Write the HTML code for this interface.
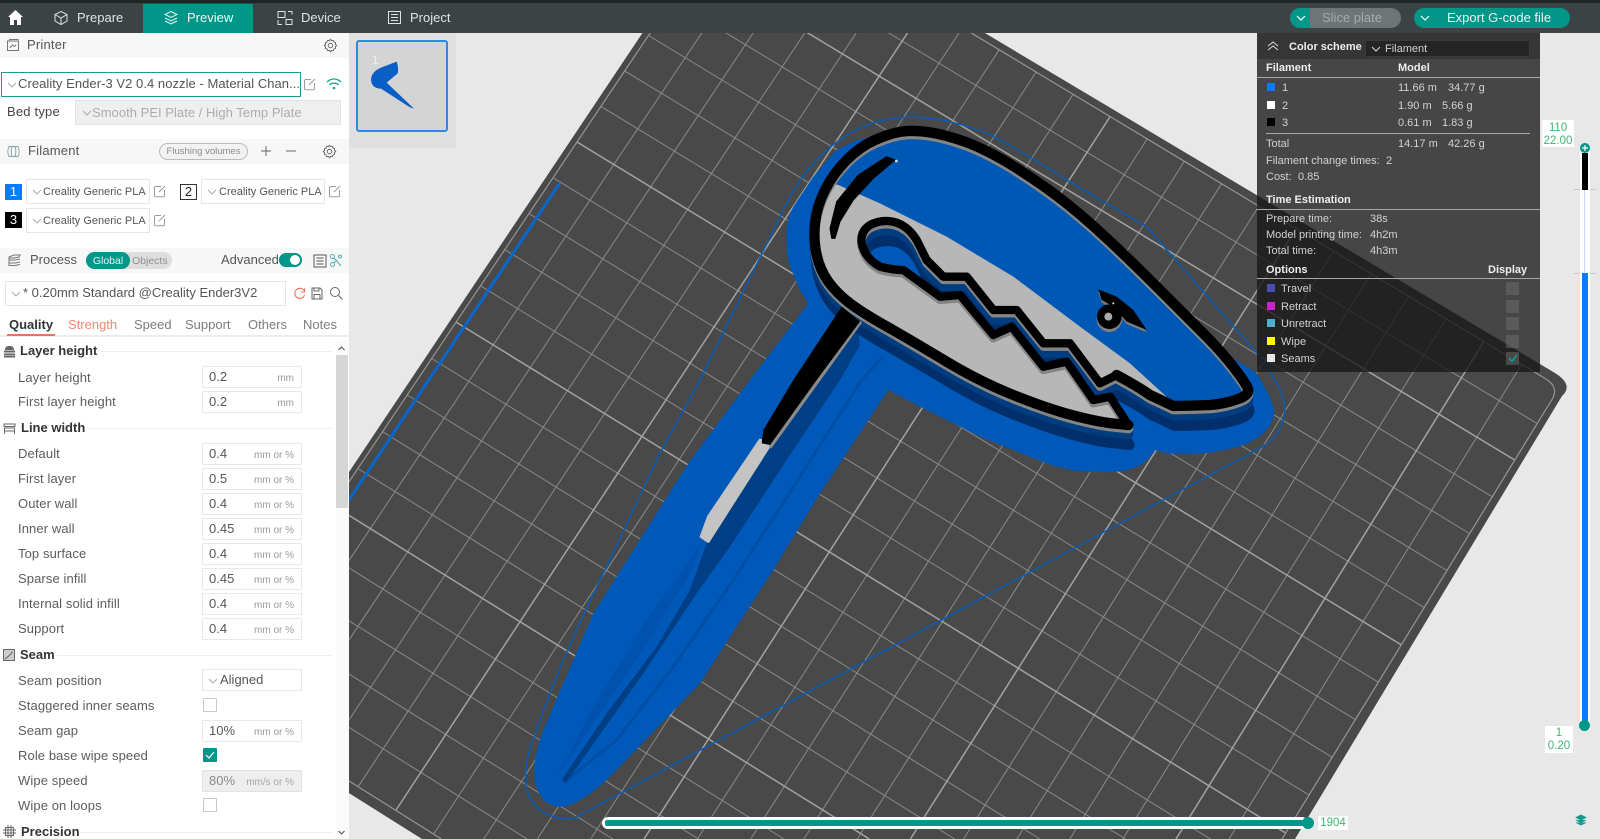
<!DOCTYPE html>
<html><head><meta charset="utf-8"><title>Preview</title>
<style>
*{box-sizing:border-box}
html,body{margin:0;padding:0;width:1600px;height:839px;overflow:hidden;background:#e8e8e8;font-family:"Liberation Sans",sans-serif;font-size:13px;color:#444}
.a{position:absolute}
.t{position:absolute;white-space:nowrap;line-height:16px;height:16px}
#top{left:0;top:0;width:1600px;height:33px;background:#3b4345;border-top:3px solid #1f2525;z-index:9}
#top .t{color:#e2e4e4;font-size:13px;letter-spacing:0;top:7px}
.hd{position:absolute;left:0;width:349px;height:25px;background:#f7f7f7}
.box{position:absolute;background:#fff;border:1px solid #e6e6e6}
.sel{font-size:11px;color:#555}
.lb{position:absolute;left:18px;white-space:nowrap;line-height:16px;color:#5c5c5c;font-size:13px;letter-spacing:.1px;margin-top:.5px}
.sec{position:absolute;left:20px;white-space:nowrap;line-height:15px;color:#333;font-size:13px;font-weight:bold}
.sl{position:absolute;height:1px;background:#efefef;right:17px}
.in{position:absolute;left:202px;width:100px;height:22px;background:#fff;border:1px solid #e8e8e8;font-size:13px;color:#555;line-height:20px;padding-left:6px}
.in i{position:absolute;right:7px;top:2px;font-style:normal;font-size:10px;color:#999}
.cb{position:absolute;left:203px;width:14px;height:14px;border:1px solid #c8c8c8;background:#fff;border-radius:1px}
.tab{position:absolute;top:317px;line-height:16px;font-size:13px;color:#7d7d7d;white-space:nowrap}
#fp{left:1257px;top:33px;width:283px;height:339px;background:rgba(23,23,23,.775);z-index:5;color:#d4d4d4;font-size:11px}
#fp .t{color:#d2d2d2;font-size:11px;line-height:14px;height:14px;margin-top:1px}
#fp .b{font-weight:bold;color:#eee}
#fp .s{position:absolute;left:10px;width:8px;height:8px}
#fp .c{position:absolute;left:249px;width:13px;height:13px;background:rgba(110,110,110,.5)}
.ln{position:absolute;background:#a8a8a8;height:1px}
.g{color:#3fb56f;font-size:11.5px;text-align:center;line-height:13px;background:#fff;position:absolute;z-index:4}
svg{display:block}
.ic{position:absolute;overflow:visible}
</style></head><body>
<svg width="0" height="0" style="position:absolute">
<symbol id="edit" viewBox="0 0 14 14"><path d="M11.5 6v5.5a1.2 1.2 0 0 1-1.2 1.2H2.7a1.2 1.2 0 0 1-1.2-1.2V3.7a1.2 1.2 0 0 1 1.2-1.2H8" fill="none" stroke="#9a9a9a" stroke-width="1"/><path d="M6 8l6-6" stroke="#9a9a9a" stroke-width="1"/></symbol>
<symbol id="gear" viewBox="0 0 16 16"><path d="M8 1.2l1.1 1.6 1.9-.3.7 1.8 1.8.7-.3 1.9L14.8 8l-1.6 1.1.3 1.9-1.8.7-.7 1.8-1.9-.3L8 14.8l-1.1-1.6-1.9.3-.7-1.8-1.8-.7.3-1.9L1.2 8l1.6-1.1-.3-1.9 1.8-.7.7-1.8 1.9.3z" fill="none" stroke="#666" stroke-width="1" stroke-linejoin="round"/><circle cx="8" cy="8" r="2.4" fill="none" stroke="#666" stroke-width="1"/></symbol>
<symbol id="chev" viewBox="0 0 10 6"><path d="M1 1l4 4 4-4" fill="none" stroke="#aaa" stroke-width="1"/></symbol>
</svg>

<!-- plate + model -->
<svg class="a" style="left:0;top:0;z-index:2" width="1600" height="839" viewBox="0 0 1600 839">
 <defs>
  <path id="H" d="M1045 975L997 970Q950 965 875 945 800 925 700 885 600 845 500 785 400 725 325 682 250 640 210 610 170 580 145 545 120 510 110 465 100 420 105 370 110 320 135 270 160 220 200 180 240 140 285 120 330 100 365 95 400 90 450 97 500 105 560 127 620 150 690 192 760 235 830 287 900 340 975 410 1050 480 1125 555 1200 630 1265 695 1330 760 1367 810 1405 860 1405 870 1405 885 1380 895 1335 912 1290 915 1235 917 1180 918 1145 901 1110 885 1075 860 1010 825L960 850 870 730 790 730 710 630 640 630 560 530 490 530 440 480 410 420Q385 380 350 368 310 355 270 375 240 395 245 430 255 475 300 500 340 510 370 510L480 590 540 585 640 705 695 680 790 800 860 785 940 900 990 890Z"/>
  <path id="O" d="M1045 975L997 970Q950 965 875 945 800 925 700 885 600 845 500 785 400 725 325 682 250 640 210 610 170 580 145 545 120 510 110 465 100 420 105 370 110 320 135 270 160 220 200 180 240 140 285 120 330 100 365 95 400 90 450 97 500 105 560 127 620 150 690 192 760 235 830 287 900 340 975 410 1050 480 1125 555 1200 630 1265 695 1330 760 1367 810 1405 860 1405 870 1405 885 1380 895 1335 912 1290 915 1235 917 1180 918 1145 901 1110 885 1075 860 1010 825"/>
  <clipPath id="hc"><use href="#H"/></clipPath>
 </defs>
 <path d="M740-113L1555 373Q1574 385 1562 396L1295 839H422L198 698Z" fill="#484948"/>
 <path fill="none" stroke="#898a89" stroke-width="1" d="M779.100-82.700L245.200 715.800M815.600-60.700L282.700 739.400M852.200-38.700L320.400 763M888.900-16.600L358.100 786.700M962.400 27.600L433.600 834.100M999.200 49.800L483.800 839M1036.100 72L537.300 839M1073.100 94.300L590.700 839M1147.200 138.900L697.400 839M1184.400 161.300L750.700 839M1221.600 183.700L803.900 839M1258.900 206.100L857.200 839M1333.700 251.100L963.600 839M1371.100 273.700L1016.800 839M1408.700 296.300L1069.800 839M1446.300 318.900L1122.900 839M1521.700 364.300L1229 839M718.200-69.800L1537.100 423.500M672.100.3L1492.100 496.700M648.500 35.500L1469.500 533.500M624.700 70.900L1446.800 570.500M600.900 106.400L1424.100 607.600M553 177.700L1378.300 682.200M528.900 213.600L1355.300 719.600M504.700 249.600L1332.200 757.300M480.500 285.800L1309 795.100M431.700 358.500L1210.500 839M407.200 395L1125.400 839M382.600 431.700L1040 839M357.800 468.500L954.700 839M308.200 542.500L784 839M283.200 579.700L698.500 839M258.100 617.100L612.800 839M232.900 654.600L527.100 839"/>
 <path fill="none" stroke="#a2a3a2" stroke-width="1.500" d="M925.600 5.500L395.800 810.400M1110.100 116.600L644 839M1296.200 228.600L910.400 839M1483.900 341.600L1176 839M695.700-34.800L1514.700 460M577 142L1401.200 644.800M456.100 322.100L1285.700 833M333 505.400L869.400 839"/>
 <path fill="none" stroke="#949594" stroke-width="1.200" d="M441.400 839L207.700 692.200 742.600-104.700 1545 378.400Q1559.500 387.100 1552 399.500L1282 839"/>

 <path d="M560 182.700L349 500" stroke="#0a66cc" stroke-width="3" fill="none"/>
 <path d="M580 815L920 631.700 1163 500 1256.700 450Q1285 435 1285 406.700 1282 385 1256.700 353L1146.700 226.700 1066.700 180Q1020 150 986.700 133 913 105 863 126.700 810 150 780 216.700L700 380 660 453 606.700 566.700Q560 660 533 740 515 790 540 810 565 825 580 815Z" fill="none" stroke="#0a5cb5" stroke-width="1.500"/>
 <g transform="translate(780 100) scale(.33333)" stroke-linejoin="round" stroke-linecap="round">
  <path fill="#0059b8" d="M85 610L-90 840-275 1090-560 1540-710 1890Q-745 1985-735 2040-720 2125-650 2120-590 2110-500 2020L-240 1750-20 1410 120 1180 325 870 420 920 600 1010 800 1090Q870 1115 930 1115 1020 1120 1060 1105 1100 1090 1125 1050 1165 1065 1200 1060 1270 1065 1330 1050 1400 1040 1450 1000 1490 960 1480 920 1470 880 1425 815L1340 765 1210 635 1060 485 910 345 770 235 640 150 500 100Q450 90 400 90 350 90 320 100L230 120 170 150 100 230 40 320Q15 370 20 420 20 470 30 500L60 570Z"/>
  <path d="M305 775L245 840 60 1130-140 1440-320 1700-490 1920-645 2045" fill="none" stroke="#004fa6" stroke-width="9"/>
  <polygon fill="#0052ae" points="-230,1320 -400,1560 -560,1820 -670,2030 -540,1840 -400,1630 -280,1440"/>
  <polygon fill="#003f86" points="230,660 240,735 180,840 20,1080 -150,1340 -250,1480 -410,1720 -640,2045 -655,2040 -520,1840 -370,1640 -270,1470 -220,1330 -30,1030"/>
  <use href="#H" transform="translate(4 60)" fill="#002f6c" stroke="#002f6c" stroke-width="30"/>
  <use href="#H" transform="translate(0 28)" fill="#003c80" stroke="#003c80" stroke-width="30"/>
  <polygon fill="#c4c4c4" stroke="#c4c4c4" stroke-width="8" points="-60,1020 -30,1035 -215,1325 -237,1310 -215,1250"/>
  <path d="M240 668L-28 1040" stroke="#8a8a8a" stroke-width="10" fill="none"/>
  <polygon fill="#000" points="185,620 240,665 110,840 -30,1035 -55,1030 -50,990 40,840"/>
  <use href="#H" fill="#b7b7b7"/>
  <g clip-path="url(#hc)"><polygon fill="#0058b5" points="100,240 175,255 300,310 500,410 700,530 900,680 1050,790 1170,900 1500,1000 1500,0 100,0"/></g>
  <use href="#H" transform="translate(0 10)" fill="none" stroke="#848484" stroke-width="25"/>
  <use href="#O" transform="translate(0 10)" fill="none" stroke="#848484" stroke-width="30"/>
  <use href="#H" fill="none" stroke="#000" stroke-width="25"/>
  <use href="#O" fill="none" stroke="#000" stroke-width="31"/>
  <polygon fill="#000" stroke="#000" stroke-width="3" points="155,415 150,385 170,305 235,225 320,170 345,180 280,235 220,300 180,365 165,415"/>
  <circle cx="349" cy="183" r="4" fill="#ddd"/>
  <circle cx="988" cy="658" r="38" fill="#808080"/>
  <polygon fill="#808080" points="955,575 1010,597 1060,637 1100,697 1040,672 1000,627 965,607"/>
  <circle cx="988" cy="650" r="37" fill="#000"/>
  <polygon fill="#000" points="955,568 1010,590 1060,630 1100,690 1040,665 1000,620 965,600"/>
  <circle cx="985" cy="650" r="12" fill="#aaa"/>
  <circle cx="1000" cy="610" r="3" fill="#eee"/>
 </g>
</svg>

<!-- thumb -->
<div class="a" style="left:349px;top:33px;width:107px;height:115px;background:#e0e0e0;z-index:3;border-radius:0 0 3px 0"></div>
<div class="a" style="left:356px;top:40px;width:92px;height:92px;background:#d4d4d4;border:2px solid #2d8ae0;border-radius:3px;z-index:3"><span class="t" style="left:14px;top:10px;color:#eee;font-size:12px">1</span></div>
<svg class="a" style="left:345px;top:30px;z-index:3" width="120" height="110" viewBox="0 0 360 330"><path d="M78 150Q78 125 110 112L155 95Q162 115 158 130 140 145 125 158L207 236 195 232 108 176Q80 175 78 150Z" fill="#0a5fc4"/></svg>

<!-- top bar -->
<div class="a" id="top">
 <svg class="ic" style="left:7px;top:6px" width="17" height="17" viewBox="0 0 17 17"><path d="M8.500 1L1 8h2v8h4v-5h3v5h4V8h2z" fill="#fff"/></svg>
 <svg class="ic" style="left:53px;top:7px" width="16" height="16" viewBox="0 0 16 16"><path d="M8 1.500l6 3v6.500l-6 3.500-6-3.500V4.500zM2 4.500l6 3.500 6-3.500M8 8v6" fill="none" stroke="#dfe2e2" stroke-width="1"/></svg>
 <span class="t" style="left:77px">Prepare</span>
 <div class="a" style="left:143px;top:1px;width:110px;height:29px;background:#009688"></div>
 <svg class="ic" style="left:163px;top:7px" width="16" height="16" viewBox="0 0 16 16"><path d="M8 1.500l6 3-6 3-6-3zM2 8l6 3 6-3M2 11l6 3 6-3" fill="none" stroke="#e8f5f3" stroke-width="1"/></svg>
 <span class="t" style="left:187px;color:#f0faf8">Preview</span>
 <svg class="ic" style="left:277px;top:7px" width="16" height="16" viewBox="0 0 16 16"><path d="M1 1.500h7v6H1zM11 1.500h4v3M1 10v4.500h4M9 9.500h6v5H9z" fill="none" stroke="#dfe2e2" stroke-width="1"/></svg>
 <span class="t" style="left:301px">Device</span>
 <svg class="ic" style="left:387px;top:7px" width="15" height="15" viewBox="0 0 15 15"><path d="M1.500 1.500h12v12h-12zM4 4.500h7M4 7.500h7M4 10.500h7" fill="none" stroke="#dfe2e2" stroke-width="1"/></svg>
 <span class="t" style="left:410px">Project</span>
 <div class="a" style="left:1290px;top:5px;width:111px;height:20px;border-radius:10px;background:#6f7474;overflow:hidden"><div class="a" style="left:0;top:0;width:20px;height:20px;background:#009688"></div></div>
 <svg class="ic" style="left:1296px;top:12px" width="10" height="6" viewBox="0 0 10 6"><path d="M1 1l4 4 4-4" fill="none" stroke="#fff" stroke-width="1.200"/></svg>
 <span class="t" style="left:1322px;color:#a6abab">Slice plate</span>
 <div class="a" style="left:1414px;top:5px;width:156px;height:20px;border-radius:10px;background:#009688"></div>
 <svg class="ic" style="left:1420px;top:12px" width="10" height="6" viewBox="0 0 10 6"><path d="M1 1l4 4 4-4" fill="none" stroke="#fff" stroke-width="1.200"/></svg>
 <span class="t" style="left:1447px;color:#e9f6f4">Export G-code file</span>
</div>

<!-- left panel -->
<div class="a" style="left:0;top:0;width:349px;height:839px;background:#fff;z-index:8;overflow:hidden">
 <div class="hd" style="top:33px"></div>
 <svg class="ic" style="left:6px;top:38px" width="14" height="14" viewBox="0 0 14 14"><path d="M1.500 3h11v9.500h-11zM3.500 3V1.500h9M4 10l2.500-3 2 1.500L10 7" fill="none" stroke="#777" stroke-width="1"/></svg>
 <span class="t" style="left:27px;top:37px;color:#555;letter-spacing:.2px">Printer</span>
 <svg class="ic" style="left:323px;top:38px" width="15" height="15"><use href="#gear"/></svg>

 <div class="a" style="left:1px;top:72px;width:300px;height:25px;border:1px solid #1b9c8e;background:#fff"></div>
 <svg class="ic" style="left:7px;top:82px" width="10" height="6"><use href="#chev"/></svg>
 <span class="t" style="left:18px;top:76px;color:#555;letter-spacing:.05px">Creality Ender-3 V2 0.4 nozzle - Material Chan...</span>
 <svg class="ic" style="left:303px;top:77px" width="14" height="14"><use href="#edit"/></svg>
 <svg class="ic" style="left:326px;top:78px" width="16" height="12" viewBox="0 0 16 12"><path d="M1 4c4-4 10-4 14 0M3.500 7c2.500-2.500 6.500-2.500 9 0" fill="none" stroke="#14a08f" stroke-width="1.300"/><circle cx="8" cy="10" r="1.300" fill="#14a08f"/></svg>
 <span class="t" style="left:7px;top:104px;color:#444;letter-spacing:.2px">Bed type</span>
 <div class="a" style="left:75px;top:100px;width:266px;height:25px;background:#efefef;border:1px solid #e2e2e2"></div>
 <svg class="ic" style="left:82px;top:110px" width="10" height="6"><use href="#chev"/></svg>
 <span class="t" style="left:92px;top:105px;color:#acacac;letter-spacing:.03px">Smooth PEI Plate / High Temp Plate</span>

 <div class="hd" style="top:139px"></div>
 <svg class="ic" style="left:7px;top:145px" width="13" height="13" viewBox="0 0 13 13"><path d="M2 1.500c-1.500 3-1.500 7 0 10M5 1.500c-1 3-1 7 0 10M8 1.500c1 3 1 7 0 10M11 1.500c1.500 3 1.500 7 0 10M2 1.500h9M2 11.500h9" fill="none" stroke="#7fa8a3" stroke-width="1"/></svg>
 <span class="t" style="left:28px;top:143px;color:#555;letter-spacing:.2px">Filament</span>
 <div class="a" style="left:159px;top:143px;width:89px;height:17px;border:1px solid #bbb;border-radius:9px;background:#f2f2f2;color:#8a8a8a;font-size:9.5px;line-height:15px;text-align:center">Flushing volumes</div>
 <svg class="ic" style="left:260px;top:145px" width="12" height="12" viewBox="0 0 12 12"><path d="M1 6h10M6 1v10" stroke="#666" stroke-width="1"/></svg>
 <svg class="ic" style="left:286px;top:145px" width="11" height="12" viewBox="0 0 11 12"><path d="M0 6h10" stroke="#666" stroke-width="1"/></svg>
 <svg class="ic" style="left:322px;top:144px" width="15" height="15"><use href="#gear"/></svg>

 <div class="a" style="left:5px;top:184px;width:17px;height:16px;background:#0a7bff;color:#fff;text-align:center;line-height:16px;font-size:13px">1</div>
 <div class="box" style="left:26px;top:179px;width:124px;height:25px"></div>
 <svg class="ic" style="left:32px;top:189px" width="10" height="6"><use href="#chev"/></svg>
 <span class="t sel" style="left:43px;top:184px">Creality Generic PLA</span>
 <svg class="ic" style="left:153px;top:184px" width="14" height="14"><use href="#edit"/></svg>
 <div class="a" style="left:180px;top:184px;width:17px;height:16px;background:#fff;border:1px solid #333;color:#222;text-align:center;line-height:14px;font-size:13px">2</div>
 <div class="box" style="left:201px;top:179px;width:124px;height:25px"></div>
 <svg class="ic" style="left:207px;top:189px" width="10" height="6"><use href="#chev"/></svg>
 <span class="t sel" style="left:219px;top:184px">Creality Generic PLA</span>
 <svg class="ic" style="left:328px;top:184px" width="14" height="14"><use href="#edit"/></svg>
 <div class="a" style="left:5px;top:212px;width:17px;height:16px;background:#000;color:#fff;text-align:center;line-height:16px;font-size:13px">3</div>
 <div class="box" style="left:26px;top:208px;width:124px;height:25px"></div>
 <svg class="ic" style="left:32px;top:218px" width="10" height="6"><use href="#chev"/></svg>
 <span class="t sel" style="left:43px;top:213px">Creality Generic PLA</span>
 <svg class="ic" style="left:153px;top:213px" width="14" height="14"><use href="#edit"/></svg>

 <div class="hd" style="top:248px"></div>
 <svg class="ic" style="left:7px;top:254px" width="14" height="13" viewBox="0 0 14 13"><path d="M2 3l5-2 6 0-1 2-5 1H2zM2 3v3h6l5-1M2 6v3h6l5-1M2 9v2.500h6l5-1" fill="none" stroke="#777" stroke-width="1"/></svg>
 <span class="t" style="left:30px;top:252px;color:#555">Process</span>
 <div class="a" style="left:86px;top:252px;width:86px;height:17px;background:#dedede;border-radius:9px"></div>
 <div class="a" style="left:86px;top:252px;width:44px;height:17px;background:#009688;border-radius:9px;color:#e8f7f5;font-size:10.500px;line-height:18px;text-align:center">Global</div>
 <span class="t" style="left:132px;top:253px;color:#8f8f8f;font-size:10.500px">Objects</span>
 <span class="t" style="left:221px;top:252px;color:#555">Advanced</span>
 <div class="a" style="left:279px;top:253px;width:23px;height:14px;background:#009688;border-radius:7px"><div class="a" style="right:2px;top:2px;width:10px;height:10px;border-radius:5px;background:#fff"></div></div>
 <svg class="ic" style="left:313px;top:254px" width="14" height="14" viewBox="0 0 14 14"><path d="M1 1h12v12H1zM3.500 4h7M3.500 7h7M3.500 10h7" fill="none" stroke="#555" stroke-width="1"/></svg>
 <svg class="ic" style="left:330px;top:254px" width="12" height="13" viewBox="0 0 12 13"><circle cx="2.500" cy="2.500" r="2" fill="none" stroke="#4db6a8"/><circle cx="2.500" cy="10.500" r="2" fill="none" stroke="#4db6a8"/><circle cx="10" cy="2.500" r="1.500" fill="none" stroke="#4db6a8"/><path d="M4 4l7 8M4 9l3-3" stroke="#4db6a8" fill="none"/></svg>

 <div class="a" style="left:5px;top:281px;width:281px;height:25px;background:#fff;border:1px solid #e6e6e6"></div>
 <svg class="ic" style="left:11px;top:291px" width="10" height="6"><use href="#chev"/></svg>
 <span class="t" style="left:23px;top:285px;color:#555">* 0.20mm Standard @Creality Ender3V2</span>
 <svg class="ic" style="left:293px;top:287px" width="13" height="13" viewBox="0 0 13 13"><path d="M11.500 8a5 5 0 1 1-.6-4.500M11.500 1.500V5H8" fill="none" stroke="#e8735a" stroke-width="1.100"/></svg>
 <svg class="ic" style="left:311px;top:287px" width="12" height="13" viewBox="0 0 12 13"><path d="M1 1h8l2 2v9H1zM3 1v3h5V1M3 12V7.500h6V12" fill="none" stroke="#666" stroke-width="1"/></svg>
 <svg class="ic" style="left:329px;top:286px" width="14" height="14" viewBox="0 0 14 14"><circle cx="6" cy="6" r="4.500" fill="none" stroke="#666" stroke-width="1"/><path d="M9.500 9.500l4 4" stroke="#666" stroke-width="1.100"/></svg>

 <span class="tab" style="left:9px;color:#333;font-weight:bold">Quality</span>
 <span class="tab" style="left:68px;color:#ea8b72">Strength</span>
 <span class="tab" style="left:134px">Speed</span>
 <span class="tab" style="left:185px">Support</span>
 <span class="tab" style="left:248px">Others</span>
 <span class="tab" style="left:303px">Notes</span>
 <div class="a" style="left:0;top:335px;width:349px;height:2px;background:#ececec"></div>
 <div class="a" style="left:7px;top:334px;width:48px;height:2px;background:#e8735a"></div>

 <div class="a" style="left:336px;top:340px;width:13px;height:499px;background:#fbfbfb"></div>
 <div class="a" style="left:336px;top:355px;width:12px;height:153px;background:#d6d6d6"></div>
 <svg class="ic" style="left:338px;top:346px" width="7" height="5" viewBox="0 0 7 5"><path d="M.5 4L3.500 1 6.500 4" fill="none" stroke="#555" stroke-width="1.100"/></svg>
 <svg class="ic" style="left:338px;top:830px" width="7" height="5" viewBox="0 0 7 5"><path d="M.5 1L3.500 4 6.500 1" fill="none" stroke="#555" stroke-width="1.100"/></svg>

 <!-- Layer height -->
 <svg class="ic" style="left:3px;top:345px" width="13" height="13" viewBox="0 0 13 13"><path d="M2 5c0-3 1.500-4 4.500-4S11 2 11 5zM1 5.500h11v2H1zM1 8.500h11v2H1zM1 11h11v1.500H1z" fill="#666"/></svg>
 <span class="sec" style="top:343px">Layer height</span><div class="sl" style="left:98px;top:351px"></div>
 <span class="lb" style="top:369px">Layer height</span><div class="in" style="top:366px">0.2<i>mm</i></div>
 <span class="lb" style="top:393px">First layer height</span><div class="in" style="top:391px">0.2<i>mm</i></div>
 <!-- Line width -->
 <svg class="ic" style="left:3px;top:422px" width="13" height="13" viewBox="0 0 13 13"><path d="M1 2h11v2.500H1zM1 6h11M1.500 6v6M11.500 6v6M1 9h11" fill="none" stroke="#666" stroke-width="1"/></svg>
 <span class="sec" style="top:420px;left:21px">Line width</span><div class="sl" style="left:88px;top:428px"></div>
 <span class="lb" style="top:445px">Default</span><div class="in" style="top:443px">0.4<i>mm or %</i></div>
 <span class="lb" style="top:470px">First layer</span><div class="in" style="top:468px">0.5<i>mm or %</i></div>
 <span class="lb" style="top:495px">Outer wall</span><div class="in" style="top:493px">0.4<i>mm or %</i></div>
 <span class="lb" style="top:520px">Inner wall</span><div class="in" style="top:518px">0.45<i>mm or %</i></div>
 <span class="lb" style="top:545px">Top surface</span><div class="in" style="top:543px">0.4<i>mm or %</i></div>
 <span class="lb" style="top:570px">Sparse infill</span><div class="in" style="top:568px">0.45<i>mm or %</i></div>
 <span class="lb" style="top:595px">Internal solid infill</span><div class="in" style="top:593px">0.4<i>mm or %</i></div>
 <span class="lb" style="top:620px">Support</span><div class="in" style="top:618px">0.4<i>mm or %</i></div>
 <!-- Seam -->
 <svg class="ic" style="left:3px;top:649px" width="12" height="12" viewBox="0 0 12 12"><rect x=".5" y=".5" width="11" height="11" fill="#ccc" stroke="#666"/><path d="M2 10C4 8 7 7 9.500 2.500" fill="none" stroke="#666"/></svg>
 <span class="sec" style="top:647px">Seam</span><div class="sl" style="left:57px;top:655px"></div>
 <span class="lb" style="top:672px">Seam position</span>
 <div class="in" style="top:669px;padding-left:17px">Aligned</div>
 <svg class="ic" style="left:208px;top:678px" width="10" height="6"><use href="#chev"/></svg>
 <span class="lb" style="top:697px">Staggered inner seams</span><div class="cb" style="top:698px"></div>
 <span class="lb" style="top:722px">Seam gap</span><div class="in" style="top:720px">10%<i>mm or %</i></div>
 <span class="lb" style="top:747px">Role base wipe speed</span>
 <div class="cb" style="top:748px;background:#009688;border-color:#009688"></div>
 <svg class="ic" style="left:205px;top:751px" width="10" height="8" viewBox="0 0 10 8"><path d="M1 4l3 3 5-6" fill="none" stroke="#fff" stroke-width="1.200"/></svg>
 <span class="lb" style="top:772px">Wipe speed</span>
 <div class="in" style="top:770px;background:#eee;color:#8a8a8a;border-color:#e2e2e2">80%<i style="color:#a5a5a5">mm/s or %</i></div>
 <span class="lb" style="top:797px">Wipe on loops</span><div class="cb" style="top:798px"></div>
 <!-- Precision -->
 <svg class="ic" style="left:3px;top:825px" width="13" height="13" viewBox="0 0 13 13"><path d="M2.500 2.500h8v8h-8zM5 0v13M8 0v13M0 5h13M0 8h13" fill="none" stroke="#666" stroke-width="1"/></svg>
 <span class="sec" style="top:824px;left:21px">Precision</span><div class="sl" style="left:80px;top:832px"></div>
</div>

<!-- floating stats panel -->
<div class="a" id="fp">
 <div class="a" style="left:0;top:0;width:283px;height:26px;background:rgba(20,20,20,.3)"></div>
 <svg class="ic" style="left:10px;top:8px" width="12" height="10" viewBox="0 0 12 10"><path d="M1 5l5-4 5 4M1 9l5-4 5 4" fill="none" stroke="#ddd" stroke-width="1"/></svg>
 <span class="t b" style="left:32px;top:6px">Color scheme</span>
 <div class="a" style="left:108px;top:7px;width:165px;height:17px;background:#252525;border:1px solid #3a3a3a;border-radius:2px"></div>
 <svg class="ic" style="left:114px;top:13px" width="10" height="6" viewBox="0 0 10 6"><path d="M1 1l4 4 4-4" fill="none" stroke="#ddd" stroke-width="1"/></svg>
 <span class="t" style="left:128px;top:8px">Filament</span>

 <span class="t b" style="left:9px;top:27px">Filament</span><span class="t b" style="left:141px;top:27px">Model</span>
 <div class="ln" style="left:0;top:44px;width:283px"></div>
 <div class="s" style="top:50px;background:#0a7bff"></div><span class="t" style="left:25px;top:47px">1</span><span class="t" style="left:141px;top:47px">11.66 m</span><span class="t" style="left:191px;top:47px">34.77 g</span>
 <div class="s" style="top:68px;background:#fff"></div><span class="t" style="left:25px;top:65px">2</span><span class="t" style="left:141px;top:65px">1.90 m</span><span class="t" style="left:185px;top:65px">5.66 g</span>
 <div class="s" style="top:85px;background:#000"></div><span class="t" style="left:25px;top:82px">3</span><span class="t" style="left:141px;top:82px">0.61 m</span><span class="t" style="left:185px;top:82px">1.83 g</span>
 <div class="ln" style="left:9px;top:100px;width:264px"></div>
 <span class="t" style="left:9px;top:103px">Total</span><span class="t" style="left:141px;top:103px">14.17 m</span><span class="t" style="left:191px;top:103px">42.26 g</span>
 <span class="t" style="left:9px;top:120px">Filament change times:</span><span class="t" style="left:129px;top:120px">2</span>
 <span class="t" style="left:9px;top:136px">Cost:</span><span class="t" style="left:41px;top:136px">0.85</span>
 <span class="t b" style="left:9px;top:159px">Time Estimation</span>
 <div class="ln" style="left:0;top:176px;width:283px"></div>
 <span class="t" style="left:9px;top:178px">Prepare time:</span><span class="t" style="left:113px;top:178px">38s</span>
 <span class="t" style="left:9px;top:194px">Model printing time:</span><span class="t" style="left:113px;top:194px">4h2m</span>
 <span class="t" style="left:9px;top:210px">Total time:</span><span class="t" style="left:113px;top:210px">4h3m</span>
 <span class="t b" style="left:9px;top:229px">Options</span><span class="t b" style="left:231px;top:229px">Display</span>
 <div class="ln" style="left:0;top:245px;width:283px"></div>
 <div class="s" style="top:251px;background:#4a4cb0"></div><span class="t" style="left:24px;top:248px">Travel</span><div class="c" style="top:249px"></div>
 <div class="s" style="top:269px;background:#cc22cc"></div><span class="t" style="left:24px;top:266px">Retract</span><div class="c" style="top:267px"></div>
 <div class="s" style="top:286px;background:#4ab0cc"></div><span class="t" style="left:24px;top:283px">Unretract</span><div class="c" style="top:284px"></div>
 <div class="s" style="top:304px;background:#ffff00"></div><span class="t" style="left:24px;top:301px">Wipe</span><div class="c" style="top:302px"></div>
 <div class="s" style="top:321px;background:#e8e8e8"></div><span class="t" style="left:24px;top:318px">Seams</span><div class="c" style="top:319px"></div>
 <svg class="ic" style="left:251px;top:321px" width="10" height="9" viewBox="0 0 10 9"><path d="M1 4.500l3 3 5-6.500" fill="none" stroke="#0e9c8c" stroke-width="1.600"/></svg>
</div>

<!-- vertical slider -->
<div class="g" style="left:1542px;top:120px;width:32px;height:27px;padding-top:2px">110<br>22.00</div>
<div class="a" style="left:1574px;top:189px;width:22px;height:1px;background:#c8c8c8;z-index:3"></div>
<div class="a" style="left:1574px;top:273px;width:22px;height:1px;background:#c8c8c8;z-index:3"></div>
<div class="a" style="left:1580px;top:150px;width:10px;height:580px;background:#fff;z-index:3"></div>
<div class="a" style="left:1584px;top:190px;width:1px;height:83px;background:#bcd8f5;z-index:3"></div>
<div class="a" style="left:1582px;top:153px;width:6px;height:37px;background:#000;z-index:3"></div>
<div class="a" style="left:1582px;top:273px;width:6px;height:450px;background:#0a7bff;z-index:3"></div>
<svg class="a" style="left:1578px;top:141px;z-index:4" width="14" height="14" viewBox="0 0 14 14"><circle cx="7" cy="7" r="5" fill="#009688"/><path d="M4 7h6M7 4v6" stroke="#fff" stroke-width="1.200"/></svg>
<div class="a" style="left:1579px;top:720px;width:11px;height:11px;border-radius:50%;background:#009688;z-index:4"></div>
<div class="g" style="left:1545px;top:726px;width:28px;height:27px;padding-top:1px">1<br>0.20</div>
<svg class="a" style="left:1575px;top:814px;z-index:4" width="12" height="12" viewBox="0 0 12 12"><path d="M6 1l5 2.500-5 2.500-5-2.500zM1 6l5 2.500L11 6M1 8.500l5 2.500 5-2.500" fill="#0e9c8c" stroke="#0e9c8c" stroke-width=".8"/></svg>

<!-- horizontal slider -->
<div class="a" style="left:602px;top:817px;width:706px;height:12px;background:#fff;border-radius:6px;z-index:4"></div>
<div class="a" style="left:605px;top:820px;width:700px;height:6px;background:#009688;border-radius:2px;z-index:4"></div>
<div class="a" style="left:1302px;top:817px;width:12px;height:12px;border-radius:50%;background:#009688;z-index:4"></div>
<div class="g" style="left:1318px;top:816px;width:30px;height:14px;line-height:14px">1904</div>
</body></html>
